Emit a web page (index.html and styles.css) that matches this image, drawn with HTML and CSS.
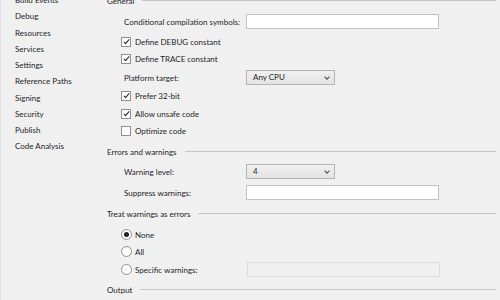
FILE: index.html
```html
<!DOCTYPE html>
<html>
<head>
<meta charset="utf-8">
<link rel="stylesheet" href="styles.css">
</head>
<body>
<div class="page">
  <nav class="sidebar">
    <div class="nav-item">Build Events</div>
    <div class="nav-item">Debug</div>
    <div class="nav-item">Resources</div>
    <div class="nav-item">Services</div>
    <div class="nav-item">Settings</div>
    <div class="nav-item">Reference Paths</div>
    <div class="nav-item">Signing</div>
    <div class="nav-item">Security</div>
    <div class="nav-item">Publish</div>
    <div class="nav-item">Code Analysis</div>
  </nav>
  <main class="main">
    <div class="row header"><span class="htext">General</span><span class="rule"></span></div>
    <div class="row field m4"><span class="label">Conditional compilation symbols:</span><span class="input"></span></div>
    <div class="row check m3"><span class="box checked"></span><span>Define DEBUG constant</span></div>
    <div class="row check m0"><span class="box checked"></span><span>Define TRACE constant</span></div>
    <div class="row field m2"><span class="label">Platform target:</span><span class="select">Any CPU<span class="chev"></span></span></div>
    <div class="row check m1"><span class="box checked"></span><span>Prefer 32-bit</span></div>
    <div class="row check m1"><span class="box checked"></span><span>Allow unsafe code</span></div>
    <div class="row check m0"><span class="box"></span><span>Optimize code</span></div>
    <div class="row header m4"><span class="htext">Errors and warnings</span><span class="rule"></span></div>
    <div class="row field m3"><span class="label">Warning level:</span><span class="select">4<span class="chev"></span></span></div>
    <div class="row field m4"><span class="label">Suppress warnings:</span><span class="input"></span></div>
    <div class="row header m4"><span class="htext">Treat warnings as errors</span><span class="rule"></span></div>
    <div class="row check m4"><span class="radio on"></span><span>None</span></div>
    <div class="row check m0"><span class="radio"></span><span>All</span></div>
    <div class="row check m1"><span class="radio"></span><span class="label-r">Specific warnings:</span><span class="input disabled"></span></div>
    <div class="row header m3"><span class="htext">Output</span><span class="rule"></span></div>
  </main>
</div>
</body>
</html>
```

FILE: styles.css
```css
html, body {
  margin: 0;
  padding: 0;
  background: #f0f0f0;
  overflow: hidden;
}
body {
  width: 500px;
  height: 300px;
  font-family: "Lato", "Open Sans", sans-serif;
  font-size: 8px;
  color: #1e1e1e;
  border-left: 1px solid #e2e2e2;
  box-sizing: border-box;
}
.page {
  display: flex;
  margin-top: -8px;
}
.sidebar {
  width: 100px;
  flex: none;
  padding-left: 14px;
  box-sizing: border-box;
}
.nav-item {
  height: 16.25px;
  line-height: 16.25px;
  white-space: nowrap;
}
.main {
  flex: 1;
  padding-left: 6px;
  padding-right: 4px;
}
.row {
  height: 17px;
  display: flex;
  align-items: center;
  white-space: nowrap;
}
.m0 { margin-top: 0; }
.m1 { margin-top: 1px; }
.m2 { margin-top: 2px; }
.m3 { margin-top: 3px; }
.m4 { margin-top: 4px; }
.header .htext {
  padding-right: 8px;
}
.rule {
  flex: 1;
  height: 1px;
  background: #c6c6c6;
}
.field {
  padding-left: 17px;
}
.field .label {
  width: 122px;
  flex: none;
}
.input {
  width: 191px;
  height: 13px;
  background: #fff;
  border: 1px solid #c3c3c3;
  flex: none;
}
.input.disabled {
  background: #f0f0f0;
  border-color: #dcdcdc;
}
.select {
  position: relative;
  width: 81px;
  height: 13px;
  line-height: 13px;
  padding-left: 6px;
  border: 1px solid #b4b4b4;
  background: linear-gradient(#f0f0f0, #e3e3e3);
  flex: none;
}
.chev {
  position: absolute;
  right: 5px;
  top: 4px;
  width: 3px;
  height: 3px;
  border-right: 1.3px solid #444;
  border-bottom: 1.3px solid #444;
  transform: rotate(45deg);
}
.check {
  padding-left: 14px;
}
.box {
  width: 8px;
  height: 8px;
  border: 1px solid #8f8f8f;
  background: #fff;
  margin-right: 4px;
  flex: none;
  position: relative;
}
.box.checked::after {
  content: "";
  position: absolute;
  left: 2.5px;
  top: 0px;
  width: 2px;
  height: 5px;
  border-right: 1.6px solid #222;
  border-bottom: 1.6px solid #222;
  transform: rotate(40deg);
}
.radio {
  width: 9px;
  height: 9px;
  border: 1px solid #8f8f8f;
  border-radius: 50%;
  background: #fff;
  margin-right: 3px;
  flex: none;
  position: relative;
}
.radio.on::after {
  content: "";
  position: absolute;
  left: 2px;
  top: 2px;
  width: 5px;
  height: 5px;
  border-radius: 50%;
  background: #222;
}
.label-r {
  width: 112px;
  flex: none;
}
```
